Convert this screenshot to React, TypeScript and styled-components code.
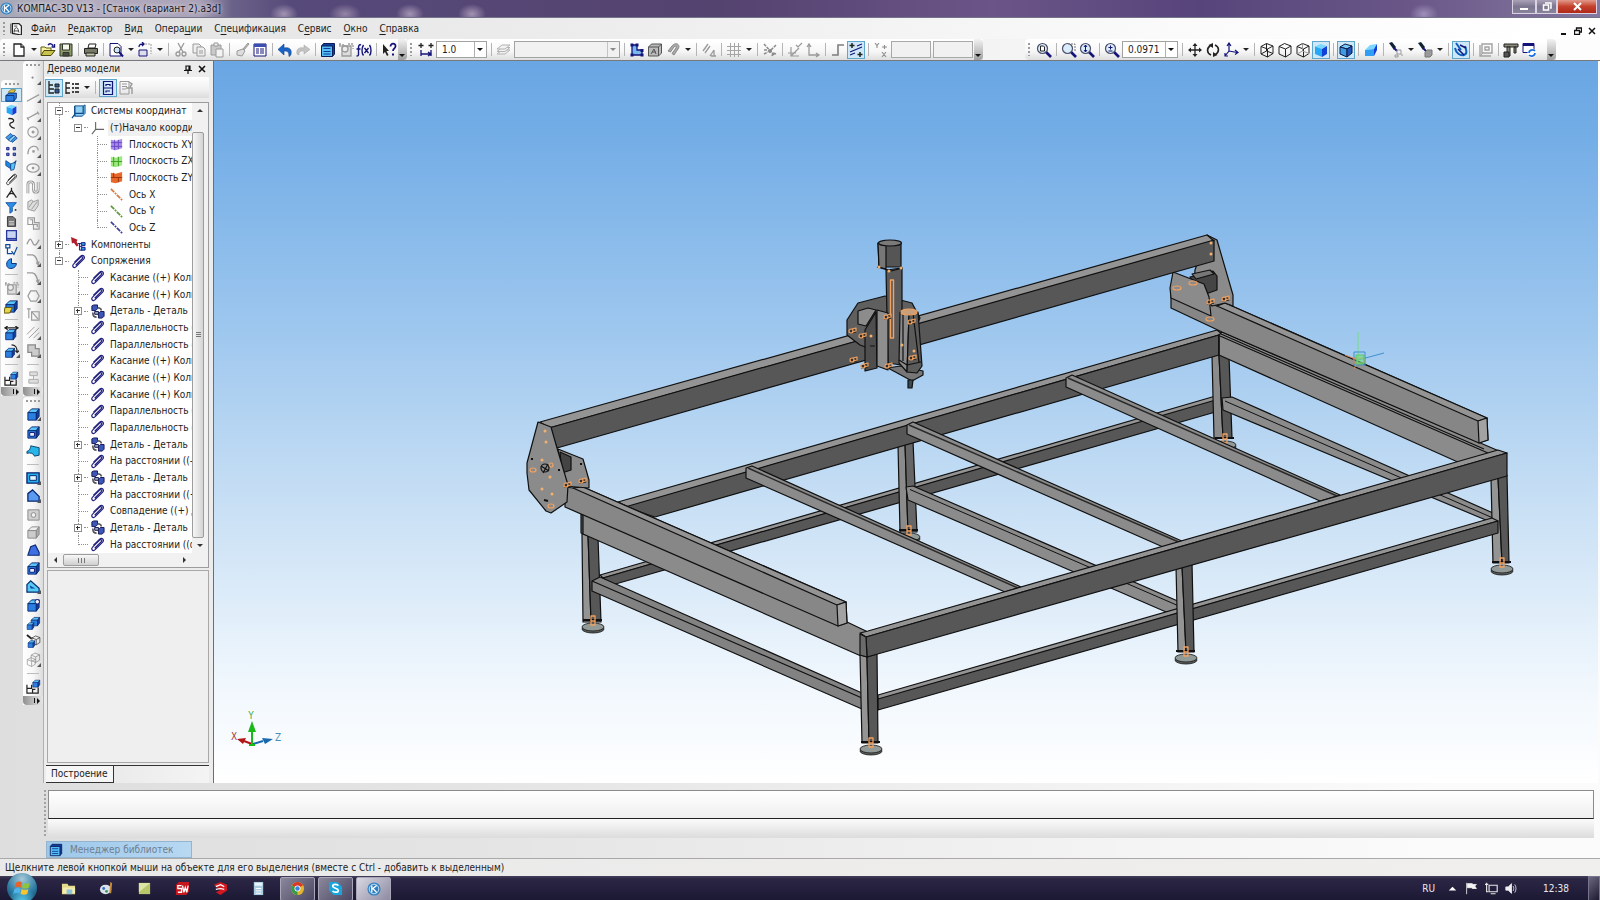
import React from "react";
import styled, { createGlobalStyle, css } from "styled-components";

const Global = createGlobalStyle`
  * { box-sizing: border-box; }
  html, body { margin: 0; padding: 0; }
  body { font-family: "DejaVu Sans Condensed", "Noto Sans", sans-serif; font-size: 10px; line-height: 16px; color: #1c1c1c; }
  button, input, select { font: inherit; color: inherit; }
  ul { list-style: none; margin: 0; padding: 0; }
`;

/* ---------- icons, all on a 16 x 16 grid ---------- */

const N = "#13137a";
const K = "#222";
const G = "#9a9a9a";
const B = "#1b6fe0";

const cube = (a: string, b: string, c: string, l: string) => (
  <g stroke={l} strokeLinejoin="round">
    <path d="M2 5l5-3 7 2-5 3z" fill={a} />
    <path d="M2 5l7 2v8l-7-3z" fill={b} />
    <path d="M9 7l5-3v7l-5 4z" fill={c} />
  </g>
);
const magnifier = (inner: React.ReactNode) => (
  <g fill="none">
    <path d="M10 10l5 5" stroke={N} strokeWidth="2.600" />
    <circle cx="6.500" cy="6.500" r="5" fill="#d9ecfa" stroke="#4d4d6b" strokeWidth="1.200" />
    {inner}
  </g>
);
const wire = (extra?: React.ReactNode) => (
  <g fill="none" stroke={K}>
    <path d="M2 4.500L7.500 1.500 14 4v7.500L8.500 15 2 12z M2 4.500l6.500 2.500L14 4 M8.500 7v8" />
    {extra}
  </g>
);
const solid = (extra?: React.ReactNode) => (
  <g>
    <g stroke="#0a2a72" strokeLinejoin="round">
      <path d="M2 6l4-4h8l-3 4z" fill="#59c4f7" />
      <path d="M2 6h9v8H2z" fill="#2b7fe0" />
      <path d="M11 6l3-4v8l-3 4z" fill="#123f9e" />
    </g>
    {extra}
  </g>
);
const greySolid = (
  <g stroke="#8a8a8a" strokeLinejoin="round">
    <path d="M2 6l4-4h8l-3 4z" fill="#eee" />
    <path d="M2 6h9v8H2z" fill="#ccc" />
    <path d="M11 6l3-4v8l-3 4z" fill="#aaa" />
  </g>
);
const paperclip = "M5 12l7-7c1.500-1.500-.5-3-2-1.500l-7 7C.5 13 3 16 5.500 13.500l8-8c2-2.500-.5-5.500-3.500-3L3.500 9";

const ICONS: Record<string, React.ReactNode> = {
  doc: (<g fill="none" stroke={K}><path d="M3 14V2h8l3 3v11z" fill="#fff" strokeWidth="1.500" /><path d="M1 2v12M5 13c0-3 1-6 3-6s2 3 3 6M5 5h4M5 11h6" /></g>),
  new: (<g fill="#fff" stroke={K} strokeWidth="1.300"><path d="M3 2h7l3 3v9H3z" /><path d="M10 2v3h3" /></g>),
  open: (<g><path d="M1 13V5h4l1 1h5v3" fill="#f7f3a0" stroke="#5c5a12" /><path d="M1 13.500l3-5h11l-4 5z" fill="#c9c34e" stroke="#4a4810" /><path d="M8 3c2-2 4-1.500 5 1m1.500-2v3h-3" fill="none" stroke={N} strokeWidth="1.400" /></g>),
  save: (<g stroke="#30382a"><path d="M2 2h12v12H2z" fill="#8c9a6c" /><path d="M4.500 2h7v6h-7z" fill="#f6f8ee" /><path d="M5 10.500h6V14H5z" fill="#4a4d40" /></g>),
  print: (<g stroke={K}><path d="M5 6l1-4h7l-1 4z" fill="#fff" /><path d="M1.500 6.500h13v5h-13z" fill="#777a66" /><path d="M3 11h9v3H3z" fill="#c5c8a8" /></g>),
  preview: (<g fill="none"><path d="M2 1.500h8l3 3V14H2z" fill="#fff" stroke={N} /><circle cx="9" cy="8" r="3" stroke={K} fill="#cfe4f4" /><path d="M11 10l4 4.500" stroke={N} strokeWidth="2" /></g>),
  pages: (<g fill="none" stroke={N}><path d="M2 8h8v6H2z" fill="#dde" /><path d="M8 2h6v10" stroke={G} strokeDasharray="2 1" /><path d="M2 5c0-3 2-3 5-3M5 0l2 2-2 2" strokeWidth="1.300" /></g>),
  cut: (<g fill="none" stroke={G} strokeWidth="1.300"><path d="M5 1l5 9M11 1L6 10" /><circle cx="5" cy="12" r="2" /><circle cx="11" cy="12" r="2" /></g>),
  copy: (<g fill="#eee" stroke={G}><path d="M2 2h6l2 2v7H2z" /><path d="M6 5h6l2 2v7H6z" /><path d="M8 9h4M8 11h4" /></g>),
  paste: (<g fill="#c9c9c9" stroke={G}><path d="M2 3h10v10H2z" /><path d="M5 1h4v3H5z" fill="#eee" /><path d="M7 7h7v8H7z" fill="#f3f3f3" /></g>),
  brush: (<g stroke={G}><path d="M9 7l5-6 1 1-5 6z" fill="#bbb" /><path d="M3 9l6-2 2 2-3 5-5-1z" fill="#ddd" /></g>),
  props: (<g><path d="M2 2h12v12H2z" fill="#fff" stroke={N} /><path d="M2 2h12v3H2z" fill="#3b4fb0" /><path d="M4 7h3M4 9h3M4 11h3M8 7h4M8 9h4M8 11h4" stroke={N} /></g>),
  undo: (<path d="M14 12c1-5-2-7-7-6V2L1 7.500 7 13V9c4 0 5 1 5 5.500 1-.5 2-1.500 2-2.500z" fill="#1a64c8" stroke="#0e3f8c" strokeWidth=".6" />),
  redo: (<path d="M2 12c-1-5 2-7 7-6V3l6 4.500L9 12V9c-4 0-5 .5-5 4z" fill="#c3c3c3" stroke="#9f9f9f" strokeWidth=".5" />),
  lib: (<g><path d="M1.500 4l2-2.500h11V12l-2 2.500" fill="#123f9e" stroke="#0a1f5c" /><path d="M1.500 4h11v10.500h-11z" fill="#55bdf2" stroke="#0a1f5c" /><path d="M3.500 6.500h7M3.500 9.500h7M3.500 12h7" stroke="#0a3f9c" /></g>),
  gear: (<g fill="none" stroke={G} strokeWidth="1.300"><path d="M4 4h9v10H4z" fill="#ddd" /><circle cx="7" cy="7" r="3" fill="#eee" /><path d="M1 3h6M2 1v4M10 2h5v5" strokeDasharray="2 1" /></g>),
  fx: (<g fill="none" stroke={N} strokeWidth="1.400"><path d="M5 3c-2-1-2.500 1-2.500 3v7c0 1-1 1-2 1M.5 7h4M7.500 3c-2 3-2 8 0 10.500M13.500 3c2 3 2 8 0 10.500M8.500 6l4 5M12.500 6l-4 5" /></g>),
  help: (<g><path d="M2 2l6 7H5.500l2 4-1.500 1-2-4L2 12z" fill={K} /><path d="M9.500 4.500c0-4 5.500-3.500 5 0-.2 2-2.500 2-2.500 4.500" fill="none" stroke={N} strokeWidth="1.800" /><path d="M11 11.500h2v2h-2z" fill={N} /></g>),
  ruler: (<g stroke={N} fill="none" strokeWidth="1.300"><path d="M3 1v5M.5 3.500h5M13 1v5M10.500 3.500h5" stroke={K} /><path d="M3 8v6M13 8v6M3 12h10M10 10l3 2-3 2" /></g>),
  layers: (<g fill="#f2f2f2" stroke="#b3b3b3"><path d="M1 12l5-4h8l-5 4z" /><path d="M1 9.500l5-4h8l-5 4z" /><path d="M1 7l5-4h8l-5 4z" /></g>),
  poly: (<g><path d="M3 3h5v5h5v5H3z" fill="#79b7ee" stroke={N} strokeWidth="1.300" /><path d="M1.500 1.500h3v3h-3zM6.500 1.500h3v3h-3zM11.500 7h3v3h-3zM11.500 11.500h3v3h-3zM1.500 11.500h3v3h-3z" fill={N} /></g>),
  letterBox: (<g fill="#bbb" stroke="#555"><path d="M1.500 5l3-3h10v9l-3 3h-10z" /><path d="M1.500 5h10v9M11.500 5l3-3M4 12l3-5 2 5M5 10h4" fill="none" /></g>),
  magnet: (<path d="M3 9l4-5c4-5 9-1 6 3l-4 6-2-1.500 4-5.500c1-2-1-2.500-2-1l-3.500 5z" fill="#aaa" stroke="#888" />),
  lines: (<g stroke={G} strokeWidth="1.300" fill="none"><path d="M2 9l5-7M4 11l5-7M9 14l4-6M13 8v6M10 14h5" /></g>),
  grid: (<path d="M4.500 1v14M8.500 1v14M12.500 1v14M1 4.500h14M1 8.500h14M1 12.500h14" stroke="#a5a5a5" fill="none" />),
  snap: (<g stroke="#8a8a8a" fill="none"><path d="M2 2l10 11M9 8l5-5M2 8h3M2 12l4-2M10 14l1-3M14 12l-3-1" strokeWidth="1.500" strokeDasharray="3 1" /><circle cx="8" cy="9" r="1.500" fill="#888" /></g>),
  lcs: (<g stroke={G} fill="none" strokeWidth="1.200"><path d="M4 5v9h8M4 14l8-8M9 3l2 2 4-4M1 11h8" /></g>),
  axes: (<g stroke={G} fill="none" strokeWidth="1.300"><path d="M4 3v10h9M2 5l2-3 2 3M11 11l3 2-3 2" /></g>),
  step: (<path d="M2 13h6V3h6" stroke="#7d7d7d" strokeWidth="1.600" fill="none" />),
  constraint: (<g stroke={K} fill="none" strokeWidth="1.500"><path d="M4 1v5M1.500 3.500h5M12 10v5M9.500 12.500h5" /><path d="M2 10l12-5M2 13l5-2M9 4l5-2" stroke={N} strokeWidth="1.100" /></g>),
  xy: (<g stroke="#8d8d8d" fill="none" strokeWidth="1.100"><path d="M2 1l2 2.500L6 1M4 3.500V6M9 5h5M11.500 3v4M9 10l4 5M13 10l-4 5" /></g>),
  zoomPage: magnifier(<path d="M4.500 4h3l1 1v4h-4z" stroke={K} fill="#fff" />),
  zoomBox: magnifier(<path d="M7 2h7v8" stroke="#777" strokeDasharray="2 1" />),
  zoomDyn: magnifier(<path d="M6.500 3v7M5 5l1.500-2L8 5M5 8l1.500 2L8 8" stroke={N} />),
  zoomPm: magnifier(<path d="M6.500 3.500v4M4.500 5.500h4M4.500 9h4" stroke={N} />),
  move: (<g><path d="M8 2v12M2 8h12" stroke={K} strokeWidth="1.300" /><path d="M8 1l2.500 3h-5zM8 15l2.500-3h-5zM1 8l3-2.500v5zM15 8l-3-2.500v5z" fill={K} /></g>),
  rotate: (<g><path d="M6 13C1.500 11 1.500 6 5.500 3.500M10 3c4.500 2 4.500 7 .5 9.500" fill="none" stroke={K} strokeWidth="1.600" /><path d="M8 1v5L3.500 3zM8 15v-5l4.500 3z" fill={K} /></g>),
  orient: (<g stroke={N} fill="none" strokeWidth="1.200"><path d="M6 9V2M6 9l8 1.500M6 9l-4 5M4 4l2-3 2 3M12 8l3 2.500-3 2M2 11v3h3" /></g>),
  wireAll: wire(<path d="M2 12l5.500-3L14 11.500M7.500 9V1.500" />),
  wireHid: wire(),
  wireThin: wire(<path d="M2 12l5.500-3L14 11.500M7.500 9V1.500" stroke={G} />),
  shaded: (<g><path d="M2 4.500L7.500 2 14 4l-5 3z" fill="#7ad8ff" /><path d="M2 4.500L9 7v8l-7-3z" fill="#27a8f5" /><path d="M9 7l5-3v8l-5 3z" fill="#1140d8" /></g>),
  shadedEdge: cube("#7cc9f5", "#3f9ae4", "#2055b8", "#0a1a4c"),
  persp: (<g><path d="M2 8l5-5 7-1-3 5z" fill="#7ad8ff" /><path d="M2 8l9-1v7H2z" fill="#2f9ef4" /><path d="M11 7l3-5v6l-3 6z" fill="#1140d8" /></g>),
  torch: (<g><path d="M1 1l3-1 4 5-2 3z" fill="#123" /><path d="M6 6l3 3" stroke={N} strokeWidth="2" /><path d="M9 8h4v4H9zM7 13h3v2H7zM13 13h2" fill="none" stroke={G} /></g>),
  torch2: (<g><path d="M1 1l3-1 4 5-2 3z" fill="#123" /><path d="M6 6l3 3" stroke={N} strokeWidth="2" /><path d="M8 10l2-2h5v5l-2 2H8z" fill="#9a9a9a" stroke="#777" /></g>),
  spin: (<g fill="none"><path d="M3 1l5 7M2 6c1 5 5 8 9 7s2-6 1-9" stroke="#0d5fc0" strokeWidth="2" /><path d="M5 7l6 6M7 3l6 3" stroke={N} strokeWidth="1.500" /></g>),
  greyBox: (<g fill="none" stroke="#a2a2a2"><path d="M2 3v11h11M4 2h10v9H4zM7 5h4v3H7z" strokeWidth="1.400" /><path d="M2 14l3-3" /></g>),
  caliper: (<g fill="#8b8b78" stroke={K}><path d="M1 2h14v3H1z" /><path d="M4 5h3v9H4zM11 5h2v6h-2z" /><path d="M1 10h5v5H1z" fill="#555" /></g>),
  refresh: (<g fill="none"><path d="M2 1.500h11v9H2z" fill="#fff" stroke={N} /><path d="M2 1.500h11v2.500H2z" fill={N} /><circle cx="11" cy="11" r="4.500" fill="#fff" /><path d="M8 11c0-3 4-4 6-2M14 11c0 3-4 4-6 2" stroke={B} strokeWidth="1.700" /></g>),
  clip: (<path d={paperclip} fill="none" stroke="#23237f" strokeWidth="1.300" />),
  clipGrey: (<path d={paperclip} fill="none" stroke="#333" strokeWidth="1.200" />),
  csys: (<g stroke="#0c4a8a"><path d="M4 2h9l2-1v9l-3 3H4z" fill="#8fd0f3" /><path d="M4 2v11M4 10H13V2M1 15l3-4" fill="none" strokeWidth="1.300" /></g>),
  origin: (<path d="M6 2v8h9M6 10l-4 5" fill="none" stroke="#666" strokeWidth="1.200" />),
  planeXY: (<g><path d="M2 3l5 1 7-2v10l-7 2-5-1z" fill="#a78be8" /><path d="M2 6h12M2 10h12M6 3v11M10 3v10" stroke="#6a47c5" /></g>),
  planeZX: (<g><path d="M2 3l5 1 7-2v10l-7 2-5-1z" fill="#9fe87f" /><path d="M2 8h12M5 3v10M10 3v10" stroke="#3a9e25" /></g>),
  planeZY: (<g><path d="M2 3l5 1 7-2v10l-7 2-5-1z" fill="#e8682a" /><path d="M2 8h12M5 3v5M10 8v5" stroke="#9c3206" /></g>),
  axisX: (<path d="M2 2l12 12" stroke="#d9783f" strokeWidth="1.800" strokeDasharray="5 1 2 1" />),
  axisY: (<path d="M2 2l12 12" stroke="#5d9a3a" strokeWidth="1.800" strokeDasharray="5 1 2 1" />),
  axisZ: (<path d="M2 2l12 12" stroke="#3f3f9c" strokeWidth="1.800" strokeDasharray="5 1 2 1" />),
  comps: (<g><path d="M0 0l7 3-1 2 2 4-2 1-3-4-2 1z" fill="#b3202c" /><path d="M7 7h4M9 7v7h3M9 10h3" stroke={N} fill="none" /><path d="M11 6h4v3h-4zM11 11h4v3h-4z" fill="#2b9fe0" stroke={N} /></g>),
  parts: (<g stroke="#141450"><path d="M2 2l2-1h4v4L6 7H2z" fill="#3b57b8" /><path d="M9 10l2-2h4v5l-2 2H9z" fill="#3b57b8" /><path d="M8 4c3 0 4 1 4 3M3 9c0 3 1 5 4 5" stroke="#555" strokeWidth="1.800" fill="none" /><path d="M5 8h4v3H5z" fill="#9ab" /></g>),
  treeA: (<g fill="none" stroke={K}><path d="M3 1v12h5M3 5h4M3 9h5" strokeWidth="1.300" /><path d="M9 4h4v3H9zM9 9h4v4H9z" fill="#2a5a9c" /></g>),
  treeB: (<g fill="none" stroke={K} strokeWidth="1.300"><path d="M2 2v12M2 3h4M2 8h4M2 13h4" /><path d="M8 4h2M8 8h2M8 12h2M11 4h4M11 8h4M11 12h4" strokeWidth="2" stroke="#444" /></g>),
  cabinet: (<g fill="none" stroke={N} strokeWidth="1.200"><path d="M3.500 1.500h9v13h-9zM3.500 8h9M6 6V4.500h4V6M6 12.500V11h4" /></g>),
  report: (<g fill="none" stroke={G}><path d="M2 1.500h9V14H2zM4 4h5M4 6.500h5M4 9h4" /><path d="M8 8h6v6M11 2l3 2-2 3" strokeWidth="1.400" /></g>),
  asm: (<g stroke="#0a2a72"><path d="M1 8l4-3h9v6l-3 4H1z" fill="#2b7fe0" /><path d="M1 8h10v7" fill="none" /><path d="M4 4l3-3h6l-2 3z" fill="#f5dc5a" stroke="#6b5a00" /></g>),
  curve: (<path d="M4 2c8-1 8 4 4 5s-2 6 4 7" fill="none" stroke={K} strokeWidth="1.600" />),
  surf: (<g fill="#3f9fe8" stroke="#0f3f8c"><path d="M1 8l6-5 3 3-6 5zM7 11l5-5 3 3-6 5z" /><path d="M4 11l7-6 2 2-6 6z" fill="#8fd0f7" /></g>),
  array: (<g fill="#5d7fc9" stroke={N}><path d="M2 3h3v3H2zM10 3h3v3h-3zM2 10h3v3H2zM10 10h3v3h-3z" /></g>),
  aux: (<g fill="#1b8be0" stroke="#0f3f8c"><path d="M1 2l6 4v6l-6-4z" /><path d="M7 6l6-2-2 9-4 1z" fill="#5dc8f5" /><path d="M14 2l-3 3" strokeWidth="1.500" /></g>),
  compass: (<path d="M8 1v3M8 4L2 13M8 4l6 9M5 9c2-1.500 4-1.500 6 0" fill="none" stroke={K} strokeWidth="1.600" />),
  filter: (<g><path d="M1 2h13L9 8v5l-3 2V8z" fill="#2b8fe8" stroke="#0d4a9a" /><path d="M12 11h2" stroke={K} strokeWidth="2" /></g>),
  sheet: (<g fill="#777" stroke={K}><path d="M3 2h7l3 3v9H3z" /><path d="M5 8h6M5 10h6M5 12h6" stroke="#ddd" /></g>),
  notebook: (<g stroke="#2a3a9c"><path d="M2 2h12v12H2z" fill="#c7d4f4" strokeWidth="1.600" /><path d="M2 12h12" strokeWidth="2" /></g>),
  weld: (<g fill="none" stroke="#0d4a9a" strokeWidth="1.500"><path d="M1 2h5v4H1zM3 6v7h6M8 10l3 4 4-9" /></g>),
  elbow: (<path d="M2 9c0-6 6-7 6-7v6h6c0 7-12 9-12 1z" fill="#2b8fe8" stroke="#0f2f7c" strokeWidth="1.200" />),
  solid: solid(),
  solidGrey: greySolid,
  solidNew: solid(<path d="M1 9h8l-3 6H0z" fill="#e8d24a" stroke="#5c5000" />),
  solidArrow: (<g><g transform="translate(0 2) scale(.9)">{solid()}</g><path d="M1 2h14M4 0L1 2l3 2M12 0l3 2-3 2" stroke={K} strokeWidth="1.200" fill="none" /></g>),
  solidTurn: (<g><g transform="translate(0 3) scale(.8)">{solid()}</g><path d="M8 1c5 0 6 3 6 8M12 7l2 2 2-2" stroke={K} strokeWidth="1.300" fill="none" /></g>),
  solidCut: solid(<path d="M4 8h5v4H4z" fill="#dff3fd" stroke={N} />),
  solidHole: solid(<circle cx="12" cy="4" r="2.400" fill="#eee" stroke={N} />),
  solidSmall: (<g><g transform="translate(6 0) scale(.62)">{solid()}</g><path d="M1 6v9h12V9M1 10h5v-4M7 15v-4h3" fill="none" stroke={K} strokeWidth="1.300" /></g>),
  solidPair: (<g><g transform="translate(4 0) scale(.75)">{solid()}</g><g transform="translate(0 6) scale(.6)">{solid()}</g></g>),
  solidPairW: (<g><g transform="translate(5 1) scale(.7)">{wire()}</g><g transform="translate(1 6) scale(.6)">{solid()}</g><path d="M1 1l5 4" stroke={K} strokeWidth="2" /></g>),
  greyPair: (<g opacity=".5"><g transform="translate(4 0) scale(.75)">{wire()}</g><g transform="translate(0 5) scale(.7)">{wire()}</g></g>),
  chamfer: (<path d="M2 6l5-4 7 7v5H2z" fill="#5a9af0" stroke="#0a2a72" strokeWidth="1.400" />),
  chamfer2: (<g><path d="M1 6l4-4 9 8v4H1z" fill="#55cbf2" stroke="#0a2a72" strokeWidth="1.300" /><path d="M4 7l6 3H5z" fill="#1140a8" /></g>),
  wedge: (<path d="M2 13l3-9 5-2 4 8v3z" fill="#3f6fe0" stroke="#0a2a72" strokeWidth="1.200" />),
  shell: (<g stroke="#0a1f6c"><path d="M1 3h13v11H1z" fill="#25b0ee" strokeWidth="1.400" /><path d="M4 6h7v5H4z" fill="#dff6ff" /></g>),
  shellGrey: (<g stroke="#8a8a8a"><path d="M2 3h12v11H2z" fill="#d0d0d0" /><circle cx="8" cy="8.500" r="2.500" fill="#f2f2f2" /></g>),
  bent: (<path d="M1 9c4-1 4-6 4-6l9 2v8l-5 1c-1-3-4-4-8-3z" fill="#27b4e8" stroke="#0a3f6c" />),
  p: (<circle cx="7" cy="7" r="1.200" fill="#888" />),
  line: (<path d="M1 13L14 6" stroke={G} strokeWidth="1.300" />),
  line2: (<g stroke={G} strokeWidth="1.300"><path d="M2 12l11-6" /><path d="M1 11l2 3M12 5l2 3" /></g>),
  circle: (<g fill="none" stroke={G} strokeWidth="1.200"><circle cx="7.500" cy="7.500" r="5.500" /><circle cx="7.500" cy="7.500" r="1" fill={G} /></g>),
  arc: (<g fill="none" stroke={G} strokeWidth="1.300"><path d="M2 12C2 2 13 1 13 8" /><circle cx="8" cy="9" r=".8" /></g>),
  ellipse: (<g fill="none" stroke={G} strokeWidth="1.300"><ellipse cx="7.500" cy="7.500" rx="6.500" ry="4.500" /><circle cx="7.500" cy="7.500" r=".8" /></g>),
  spline: (<g fill="none"><path d="M2 14V5c0-4 6-4 6 0v5c0 4 5 4 5 0V2" stroke={G} strokeWidth="3" /><path d="M2 14V5c0-4 6-4 6 0v5c0 4 5 4 5 0V2" stroke="#fff" /></g>),
  hatch: (<g fill="#ddd" stroke={G}><path d="M2 4l4-2 2 2 5-2v6l-4 6-7-2z" /><path d="M3 10l5-7M6 12l6-8" /></g>),
  contour: (<path d="M2 2h7v5h5v7H8V9H2z M4 4h3v5h5v3" fill="none" stroke={G} strokeWidth="1.200" />),
  wave: (<path d="M1 11c3-7 4-7 6-2s4 3 7-3" fill="none" stroke={G} strokeWidth="1.400" />),
  fillet: (<path d="M1 3h6c4 1 5 5 6 11M11 11l2 3 1-4" fill="none" stroke={G} strokeWidth="1.300" />),
  hexagon: (<path d="M5 2h6l3 5.500L11 13H5L2 7.500z" fill="none" stroke={G} strokeWidth="1.300" />),
  project: (<g fill="none" stroke={G} strokeWidth="1.200"><path d="M1 2h4M3 2v10M6 5h8v9H6z" /><path d="M6 5l7 8" /></g>),
  hatch2: (<path d="M1 10l8-8M3 14L14 3M8 14l6-6" fill="none" stroke={G} />),
  union: (<path d="M2 2h8v4h4v8H6v-4H2z" fill="#ccc" stroke="#888" strokeWidth="1.300" />),
  stamp: (<g fill="#ddd" stroke="#aaa"><path d="M4 2h8v4H4z" /><path d="M8 6v4M3 10h10v4H3z" /></g>),
  flag: (<path d="M2 1v14M3 2h6v5H3zM9 3h5l-2 2 2 3H9z" fill="#f4f4f4" stroke="#f4f4f4" />),
  net: (<g fill="none" stroke="#e8e8e8" strokeWidth="1.400"><path d="M5 4h10v8H5zM7 14.500h6M2 1v6M0 3h4M2 7v5h2" /></g>),
  sound: (<g fill="#f0f0f0" stroke="#f0f0f0"><path d="M1 6h3l4-4v12l-4-4H1z" /><path d="M10 5c1 2 1 4 0 6M12 3c2 3 2 7 0 10" fill="none" /></g>),
  up: (<path d="M4 10l4-4 4 4z" fill="#fff" />),
};

type IconName = keyof typeof ICONS & string;
const Svg = styled.svg<{ $s: number }>`
  width: ${(p) => p.$s}px;
  height: ${(p) => p.$s}px;
  flex: none;
  display: block;
`;
const Icon = ({ name, size = 15 }: { name: IconName; size?: number }) => (
  <Svg $s={size} viewBox="0 0 16 16" aria-hidden="true">{ICONS[name]}</Svg>
);

/* ---------- frame ---------- */

const Window = styled.div`
  min-height: 100vh;
  display: flex;
  flex-direction: column;
  background: linear-gradient(90deg, #dedede 0, #e4e4e4 30%, #fbfbfb 90%);
`;

const TitleBar = styled.header`
  display: flex;
  align-items: center;
  height: 18px;
  border-bottom: 1px solid #73738a;
  color: #17171c;
  background:
    radial-gradient(ellipse 14px 10px at 284px 14px, #a394b3, transparent),
    radial-gradient(ellipse 16px 10px at 345px 14px, #9585a5, transparent),
    radial-gradient(ellipse 14px 10px at 410px 14px, #a394b3, transparent),
    radial-gradient(ellipse 14px 10px at 472px 14px, #a394b3, transparent),
    radial-gradient(ellipse 14px 10px at 1424px 14px, #a08ebb, transparent),
    linear-gradient(90deg, #a6a8b6 0, #b4adc0 90px, #aaa2b8 200px, #6b6289 232px, #564a7a 290px, #54426f 45%, #6b5588 62%, #57447a 75%, #6a5788 88%, #8478a0 100%);
`;
const WindowTitle = styled.h1`
  margin: 0 auto 0 4px;
  font-size: 10px;
  line-height: 16px;
  font-weight: 400;
  text-shadow: 0 0 4px #fff;
`;
const Caption = styled.div`
  display: flex;
  align-self: flex-start;
  margin-right: 3px;
`;
const CaptionButton = styled.button<{ $w: number; $close?: boolean }>`
  width: ${(p) => p.$w}px;
  height: 14px;
  padding: 0;
  border: 1px solid #d8d2e2;
  border-top: 0;
  display: flex;
  align-items: center;
  justify-content: center;
  background: ${(p) => (p.$close ? "linear-gradient(#e29a8c, #c4412c 50%, #b02a1a)" : "linear-gradient(#aaa2b8, #7d7690 50%, #8a839c)")};
`;

const MenuBar = styled.nav`
  display: flex;
  align-items: center;
  height: 21px;
  background: linear-gradient(90deg, #e3e3e3, #ececec 35%, #fbfbfb 75%, #fff);
`;
const MenuItems = styled.div`
  display: flex;
  gap: 12px;
  margin: 0 auto 0 8px;
`;
const MenuButton = styled.button`
  border: 0;
  padding: 0;
  background: none;
  line-height: 18px;
  u { text-underline-offset: 2px; }
`;
const MdiButton = styled.button`
  width: 14px;
  height: 14px;
  border: 0;
  padding: 0;
  background: none;
  display: flex;
  align-items: center;
  justify-content: center;
`;
const MdiGroup = styled.div`
  display: flex;
  margin-right: 1px;
  padding-top: 4px;
`;

const Bars = styled.div`
  display: flex;
  height: 22px;
  border-bottom: 1px solid #77797c;
  background: linear-gradient(90deg, #e6e6e6, #f0f0f0 50%, #fdfdfd);
`;
const Toolbar = styled.div<{ $end?: boolean }>`
  display: flex;
  align-items: center;
  height: 21px;
  border-radius: 4px 0 0 4px;
  background: linear-gradient(#fff 10%, #f6f6f6 60%, #dedede);
  ${(p) => p.$end && css`margin-left: auto; margin-right: 44px;`}
`;
const Grip = styled.span<{ $row?: boolean }>`
  flex: none;
  ${(p) =>
    p.$row
      ? css`width: 14px; height: 2px; background: repeating-linear-gradient(90deg, #9b9b9b 0 2px, transparent 2px 4px);`
      : css`width: 2px; height: 13px; margin: 0 5px 0 3px; background: repeating-linear-gradient(#9b9b9b 0 2px, transparent 2px 4px);`}
`;
const Overflow = styled.span<{ $apart?: boolean }>`
  position: relative;
  width: 9px;
  margin-left: ${(p) => (p.$apart ? 9 : 0)}px;
  align-self: stretch;
  border-radius: 0 4px 4px 0;
  background: linear-gradient(#f2f2f2, #9f9f9f);
  &::after { content: ""; position: absolute; left: 1px; bottom: 3px; border: 3px solid transparent; border-top-color: #111; border-bottom: 0; }
`;
const ToolButton = styled.button<{ $on?: boolean }>`
  flex: none;
  width: 18px;
  height: 18px;
  padding: 0;
  display: flex;
  align-items: center;
  justify-content: center;
  border: 1px solid ${(p) => (p.$on ? "#5fa6cf" : "transparent")};
  background: ${(p) => (p.$on ? "#cfe8f7" : "none")};
`;
const Caret = styled.button`
  flex: none;
  width: 11px;
  height: 18px;
  padding: 0;
  border: 0;
  background: none;
  display: flex;
  align-items: center;
  justify-content: center;
  &::after { content: ""; border: 3px solid transparent; border-top-color: #222; border-bottom: 0; }
`;
const Sep = styled.span`
  flex: none;
  width: 1px;
  height: 13px;
  margin: 0 3px;
  background: #b5b5b5;
`;
const Combo = styled.label<{ $w: number; $off?: boolean }>`
  flex: none;
  width: ${(p) => p.$w}px;
  height: 17px;
  margin: 0 1px;
  display: flex;
  border: 1px solid #a2a2a2;
  background: ${(p) => (p.$off ? "#f1f1f1" : "#fff")};
`;
const ComboSelect = styled.select`
  flex: 1;
  min-width: 0;
  border: 0;
  padding: 0 0 0 5px;
  appearance: none;
  background: linear-gradient(#b0b0b0, #b0b0b0) right 11px top 0 / 1px 100% no-repeat;
  line-height: 15px;
  outline: 0;
`;
const ComboArrow = styled.span<{ $off?: boolean }>`
  align-self: center;
  margin: 0 3px 0 -9px;
  border: 3px solid transparent;
  border-top-color: ${(p) => (p.$off ? "#888" : "#111")};
  border-bottom: 0;
  pointer-events: none;
`;
const CoordInput = styled.input`
  flex: none;
  width: 40px;
  height: 17px;
  margin: 0 1px;
  padding: 0;
  border: 1px solid #a8a8a8;
  background: #f1f1f1;
`;

/* Toolbar contents: "|" is a separator, "v" a drop-down caret, "*" marks a pressed button. */
const Tools = ({ items }: { items: string[] }) => (
  <>
    {items.map((it, i) => {
      if (it === "|") return <Sep key={i} />;
      if (it === "v") return <Caret key={i} aria-label="Ещё" />;
      const on = it.startsWith("*");
      const name = on ? it.slice(1) : it;
      return (
        <ToolButton key={i} $on={on} aria-label={name} aria-pressed={on || undefined}>
          <Icon name={name} size={16} />
        </ToolButton>
      );
    })}
  </>
);
const ComboBox = ({ label, value, width, off }: { label: string; value: string; width: number; off?: boolean }) => (
  <Combo $w={width} $off={off}>
    <ComboSelect aria-label={label} disabled={off} defaultValue={value}><option>{value}</option></ComboSelect>
    <ComboArrow $off={off} />
  </Combo>
);

/* ---------- body ---------- */

const Body = styled.main`
  flex: 1;
  display: flex;
  min-height: 0;
`;
const Rail = styled.div<{ $w: number }>`
  flex: none;
  width: ${(p) => p.$w}px;
  padding-left: 1px;
`;
const RailBar = styled.div<{ $h?: number; $top?: number }>`
  margin-top: ${(p) => p.$top ?? 0}px;
  min-height: ${(p) => p.$h ?? 0}px;
  display: flex;
  flex-direction: column;
  align-items: stretch;
  border-radius: 4px 4px 0 0;
  background: linear-gradient(90deg, #fff, #f7f7f7 50%, #dcdcdc);
`;
const RailGrip = styled.div`
  height: 8px;
  display: flex;
  align-items: center;
  justify-content: center;
`;
const RailButton = styled.button<{ $on?: boolean; $more?: boolean; $h?: number }>`
  position: relative;
  ${(p) => (p.$h ? css`flex: none; height: ${p.$h}px;` : css`flex: 1;`)}
  padding: 0;
  display: flex;
  align-items: center;
  justify-content: center;
  border: 1px solid ${(p) => (p.$on ? "#5fa6cf" : "transparent")};
  background: ${(p) => (p.$on ? "#cfe8f7" : "none")};
  ${(p) => p.$more && css`&::after { content: ""; position: absolute; right: 1px; bottom: 1px; border: 2px solid #555; border-top-color: transparent; border-left-color: transparent; }`}
`;
const RailSep = styled.span`
  height: 1px;
  margin: 4px 4px;
  background: #bdbdbd;
`;
const RailEnd = styled.span`
  position: relative;
  height: 9px;
  border-radius: 0 0 4px 4px;
  background: linear-gradient(90deg, #8f8f8f, #e8e8e8);
  &::before { content: ""; position: absolute; right: 8px; top: 2px; width: 1px; height: 5px; background: #111; }
  &::after { content: ""; position: absolute; right: 3px; top: 2px; border: 3px solid transparent; border-left-color: #111; border-right: 0; }
`;
/* Rail contents: "|" is a separator, "*" a pressed button, a trailing "+" one with a fly-out. */
const RailTools = ({ items, height }: { items: string[]; height?: number }) => (
  <>
    {items.map((it, i) => {
      if (it === "|") return <RailSep key={i} />;
      const on = it.startsWith("*");
      const more = it.endsWith("+");
      const name = it.replace(/[*+]/g, "");
      return (
        <RailButton key={i} $on={on} $more={more} $h={height} aria-label={name}>
          <Icon name={name} size={height === 14 ? 13 : 15} />
        </RailButton>
      );
    })}
  </>
);

const Panel = styled.aside`
  flex: none;
  width: 171px;
  padding: 0 4px 0 3px;
  display: flex;
  flex-direction: column;
  background: #ececec;
  border-left: 1px solid #b0b0b0;
  border-right: 1px solid #6e6e6e;
`;
const PanelHead = styled.div`
  display: flex;
  align-items: center;
  height: 16px;
  h2 { margin: 0 auto 0 0; font-size: 10px; line-height: 16px; font-weight: 400; }
`;
const HeadButton = styled.button`
  width: 14px;
  height: 14px;
  padding: 0;
  border: 0;
  background: none;
  display: flex;
  align-items: center;
  justify-content: center;
`;
const PanelTools = styled.div`
  display: flex;
  align-items: center;
  height: 21px;
  margin-left: -2px;
  background: linear-gradient(#fff, #f0f0f0 60%, #dcdcdc);
`;
const TreeBox = styled.div`
  flex: none;
  margin-top: 4px;
  display: grid;
  grid-template-columns: 1fr 16px;
  border: 1px solid #9c9c9c;
  background: #fff;
`;
const TreeList = styled.ul`
  height: 450px;
  overflow: hidden;
  display: grid;
  grid-auto-rows: 1fr;
`;
const TreeRow = styled.li<{ $depth: number; $sel?: boolean }>`
  position: relative;
  min-height: 0;
  display: flex;
  align-items: center;
  padding-left: ${(p) => 6 + p.$depth * 19}px;
  white-space: nowrap;
  background: ${(p) => (p.$sel ? "linear-gradient(90deg, transparent 60px, #f0f0f0 60px)" : "none")};
`;
/* A vertical dotted guide running through the row at a tree level. */
const Guide = styled.i<{ $level: number; $end?: boolean }>`
  position: absolute;
  left: ${(p) => 11 + p.$level * 19}px;
  top: 0;
  height: ${(p) => (p.$end ? "50%" : "100%")};
  border-left: 1px dotted #8f8f8f;
`;
const Toggle = styled.button`
  position: relative;
  flex: none;
  width: 8px;
  height: 8px;
  margin: 0 2px 0 1px;
  padding: 0;
  border: 1px solid #8d8d8d;
  background: #fff;
  &::before { content: ""; position: absolute; left: 1px; top: 3px; width: 4px; height: 1px; margin-top: -1px; background: #333; }
  &[aria-expanded="false"]::after { content: ""; position: absolute; left: 3px; top: 1px; width: 1px; height: 4px; margin-left: -1px; background: #333; }
`;
const Dash = styled.i<{ $long?: boolean }>`
  flex: none;
  width: ${(p) => (p.$long ? 9 : 4)}px;
  margin-left: ${(p) => (p.$long ? 6 : 0)}px;
  border-top: 1px dotted #8f8f8f;
`;
const TreeLabel = styled.span`
  margin-left: 5px;
`;
const TreeIcon = styled.span`
  width: 15px;
  flex: none;
  margin-left: 2px;
`;
const VScroll = styled.div`
  display: flex;
  flex-direction: column;
  align-items: flex-start;
  background: #f1f1f1;
`;
const HScroll = styled.div`
  grid-column: 1 / 3;
  display: flex;
  align-items: center;
  height: 14px;
  padding-right: 16px;
  background: #f1f1f1;
`;
const ScrollButton = styled.button<{ $dir: "up" | "down" | "left" | "right" }>`
  width: 15px;
  height: 15px;
  flex: none;
  border: 0;
  padding: 0;
  background: none;
  display: flex;
  align-items: center;
  justify-content: center;
  &::after {
    content: "";
    border: 3px solid transparent;
    ${(p) => ({
      up: "border-bottom-color:#333;border-top:0;",
      down: "border-top-color:#333;border-bottom:0;",
      left: "border-right-color:#333;border-left:0;",
      right: "border-left-color:#333;border-right:0;",
    })[p.$dir]}
  }
`;
const VThumb = styled.div`
  flex: 1;
  width: 12px;
  margin-top: 14px;
  display: flex;
  align-items: center;
  justify-content: center;
  border: 1px solid #9d9d9d;
  border-radius: 2px;
  background: linear-gradient(90deg, #f6f6f6, #d4d4d4);
  &::after { content: ""; width: 5px; height: 6px; background: repeating-linear-gradient(#777 0 1px, transparent 1px 2px); }
`;
const HThumb = styled.div`
  width: 36px;
  height: 12px;
  margin-right: auto;
  display: flex;
  align-items: center;
  justify-content: center;
  border: 1px solid #9d9d9d;
  border-radius: 2px;
  background: linear-gradient(#f8f8f8, #cfcfcf);
  &::after { content: ""; width: 7px; height: 5px; background: repeating-linear-gradient(90deg, #777 0 1px, transparent 1px 3px); }
`;
const Preview = styled.div`
  flex: 1;
  margin-top: 2px;
  border: 1px solid #a8a8a8;
  background: #efefef;
`;
const TabRow = styled.div`
  height: 18px;
  margin: 2px 0 0 -1px;
  border-top: 1px solid #333;
  background: linear-gradient(90deg, #e4e4e4, #f4f4f4);
`;
const Tab = styled.button`
  height: 17px;
  padding: 0 6px 0 5px;
  border: 0;
  border-right: 1px solid #333;
  border-bottom: 1px solid #333;
  background: #f6f6f6;
  line-height: 16px;
`;

const Viewport = styled.section`
  flex: 1;
  min-width: 0;
  display: flex;
  margin-right: 2px;
  background: linear-gradient(#69a6e3 0, #73ade6 10%, #9cc6ee 36%, #c9e0f5 62%, #f0f7fd 86%, #fff 100%);
`;
const Drawing = styled.svg`
  width: 100%;
  height: 100%;
  display: block;
`;

/* ---------- footer ---------- */

const PropertyBar = styled.div`
  display: flex;
  padding: 7px 6px 2px 44px;
`;
const PropertyFields = styled.div`
  flex: 1;
`;
const PropertyLine = styled.div`
  height: 29px;
  border: 1px solid #8c8c8c;
  border-bottom-color: #222;
  background: linear-gradient(#fff, #efefef);
`;
const PropertyTabs = styled.div`
  height: 19px;
  background: linear-gradient(#fbfbfb, #dcdcdc);
`;
const PropertyGrip = styled.span`
  width: 2px;
  margin-right: 2px;
  background: repeating-linear-gradient(#a2a2a2 0 2px, transparent 2px 4px);
`;
const DockRow = styled.div`
  padding: 1px 0 0 46px;
  height: 19px;
  border-bottom: 1px solid #a9a9a9;
`;
const DockTab = styled.button`
  width: 146px;
  height: 17px;
  display: flex;
  align-items: center;
  gap: 7px;
  padding: 0 0 0 2px;
  border: 1px solid #93b5d0;
  background: linear-gradient(90deg, #9cc7ea, #b8d8f2);
  color: #6f7f90;
`;
const StatusBar = styled.footer`
  height: 17px;
  padding-left: 5px;
  line-height: 17px;
  background: linear-gradient(90deg, #e9e9e9, #f0efed);
`;

const Taskbar = styled.div`
  height: 25px;
  display: flex;
  align-items: center;
  background: linear-gradient(#453f5a 0, #2b2643 3px, #221e3b 60%, #1a1833);
  color: #e9e9ef;
`;
const StartButton = styled.button`
  position: relative;
  width: 30px;
  height: 30px;
  margin: -3px 0 -2px 7px;
  padding: 0;
  border: 0;
  border-radius: 50%;
  background: radial-gradient(circle at 50% 100%, #5fd8f8, transparent 45%), radial-gradient(circle at 50% 20%, #a5c9d8, #2b7aa2 55%, #0c3352);
  display: flex;
  align-items: center;
  justify-content: center;
`;
const TaskList = styled.div`
  display: flex;
  margin: 0 auto 0 12px;
`;
const TaskButton = styled.button<{ $state?: "open" | "front" }>`
  width: 38px;
  height: 24px;
  padding: 0;
  display: flex;
  align-items: center;
  justify-content: center;
  border: 1px solid transparent;
  background: none;
  ${(p) =>
    p.$state &&
    css`
      width: 35px;
      margin-left: 3px;
      border-color: #a9a6b8;
      border-radius: 2px;
      background: ${p.$state === "front" ? "linear-gradient(135deg, #d8d8e2, #8d8aa2)" : "linear-gradient(135deg, #8b889c, #4b4763)"};
    `}
`;
const Tray = styled.div`
  display: flex;
  align-items: center;
  gap: 5px;
`;
const TrayButton = styled.button`
  width: 15px;
  height: 18px;
  padding: 0;
  border: 0;
  background: none;
  display: flex;
  align-items: center;
`;
const Clock = styled.time`
  margin: 0 19px 0 23px;
`;
const Language = styled.span`
  margin-right: 5px;
`;
const ShowDesktop = styled.button`
  width: 12px;
  height: 25px;
  padding: 0;
  border: 1px solid #77738c;
  background: linear-gradient(135deg, #6b6780, #1d1a32);
`;

/* ---------- data ---------- */

type Node = { d: number; t: string; i: IconName; tog?: "+" | "-"; sel?: boolean };
const TREE: Node[] = [
  { d: 0, t: "Системы координат", i: "csys", tog: "-" },
  { d: 1, t: "(т)Начало координат", i: "origin", tog: "-", sel: true },
  { d: 2, t: "Плоскость XY", i: "planeXY" },
  { d: 2, t: "Плоскость ZX", i: "planeZX" },
  { d: 2, t: "Плоскость ZY", i: "planeZY" },
  { d: 2, t: "Ось X", i: "axisX" },
  { d: 2, t: "Ось Y", i: "axisY" },
  { d: 2, t: "Ось Z", i: "axisZ" },
  { d: 0, t: "Компоненты", i: "comps", tog: "+" },
  { d: 0, t: "Сопряжения", i: "clip", tog: "-" },
  { d: 1, t: "Касание ((+) Кольцо", i: "clip" },
  { d: 1, t: "Касание ((+) Кольцо", i: "clip" },
  { d: 1, t: "Деталь - Деталь", i: "parts", tog: "+" },
  { d: 1, t: "Параллельность ((+)", i: "clip" },
  { d: 1, t: "Параллельность ((+)", i: "clip" },
  { d: 1, t: "Касание ((+) Кольцо", i: "clip" },
  { d: 1, t: "Касание ((+) Кольцо", i: "clip" },
  { d: 1, t: "Касание ((+) Кольцо", i: "clip" },
  { d: 1, t: "Параллельность ((+)", i: "clip" },
  { d: 1, t: "Параллельность ((+)", i: "clip" },
  { d: 1, t: "Деталь - Деталь", i: "parts", tog: "+" },
  { d: 1, t: "На расстоянии ((-)", i: "clip" },
  { d: 1, t: "Деталь - Деталь", i: "parts", tog: "+" },
  { d: 1, t: "На расстоянии ((+)", i: "clip" },
  { d: 1, t: "Совпадение ((+) Деталь", i: "clip" },
  { d: 1, t: "Деталь - Деталь", i: "parts", tog: "+" },
  { d: 1, t: "На расстоянии ((фикс)", i: "clip" },
];

const MENU: [string, string, string][] = [
  ["", "Ф", "айл"], ["", "Р", "едактор"], ["", "В", "ид"], ["Опера", "ц", "ии"],
  ["С", "п", "ецификация"], ["С", "е", "рвис"], ["", "О", "кно"], ["", "С", "правка"],
];

/* ---------- the machine ---------- */

const LIGHT = "#8b8b8b";
const DARK = "#575757";
const TOP = "#949494";
type Shape = [string, string];
const Faces = ({ shapes }: { shapes: Shape[] }) => (
  <>{shapes.map(([pts, fill], i) => <polygon key={i} points={pts} fill={fill} />)}</>
);
const Foot = ({ x, y }: { x: number; y: number }) => (
  <g>
    <ellipse cx={x} cy={y + 2} rx="11" ry="4" fill="#5c6260" strokeWidth=".8" />
    <ellipse cx={x} cy={y} rx="11" ry="4" fill="#929a97" strokeWidth=".8" />
    <path d={`M${x - 10} ${y - 7}h19`} strokeWidth="2" />
    <path d={`M${x - 2} ${y - 2}v-9h4v9z M${x - 2} ${y - 6}h4`} stroke="#f2a15e" fill="none" strokeWidth="1.300" />
  </g>
);
const Bolts = ({ at }: { at: [number, number][] }) => (
  <g fill="none">
    {at.map(([x, y], i) => (
      <g key={i}>
        <path d={`M${x - 4} ${y + 1}l7-1`} strokeWidth="3.500" stroke="#33302c" />
        <ellipse cx={x - 2} cy={y} rx="2" ry="2" stroke="#f2a15e" />
        <path d={`M${x - 1} ${y - 2}l4-1v3l-4 1`} stroke="#f2a15e" />
      </g>
    ))}
  </g>
);

const Machine = () => (
  <Drawing viewBox="214 61 1384 722" preserveAspectRatio="xMidYMid meet" role="img" aria-label="Станок">
    <g stroke="#101010" strokeWidth="1.200" strokeLinejoin="round" fill="none">
      {/* rear lower rail */}
      <Faces shapes={[["600,575 1219,395 1219,400 603,578", TOP], ["603,578 1219,399 1219,411 612,585", DARK]]} />
      {/* rear legs */}
      <Faces shapes={[["1212,355 1219,355 1223,438 1214,438", LIGHT], ["1219,355 1229,357 1232,438 1223,438", DARK]]} />
      <Foot x={1225} y={445} />
      <Faces shapes={[["898,445 905,443 908,532 900,532", LIGHT], ["905,443 913,441 917,532 908,532", "#666"]]} />
      <Foot x={909} y={537} />
      {/* lower side and middle rails */}
      <Faces shapes={[
        ["1222,398 1232,397 1493,513 1493,523 1223,410", LIGHT],
        ["906,487 913,486 1180,602 1180,618 908,500", LIGHT],
      ]} />
      <path d="M1225 401L1493 518M910 489.500L1180 606.500" strokeWidth="1" />
      {/* rear beam */}
      <Faces shapes={[["618,502 1217,330 1222,334 628,507", TOP], ["625,507 1219,335 1219,355 655,517", DARK]]} />
      {/* cross members */}
      <Faces shapes={[
        ["746,468 752,466 1021,587 1005,592 746,478", LIGHT],
        ["907,425 913,422 1184,542 1163,547 907,434", LIGHT],
        ["1066,378 1072,375 1340,495 1320,501 1066,387", LIGHT],
      ]} />
      <path d="M748 468L1018 588M909 425L1181 543M1068 378L1337 496" strokeWidth="1.500" stroke="#2a2a2a" />
      {/* right side beam and guide */}
      <Faces shapes={[
        ["1219,335 1222,332 1499,451 1460,463 1219,355", LIGHT],
        ["1171,308 1171,290 1217,306 1225,303 1487,418 1488,440 1479,443 1222,332", "#868686"],
        ["1217,306 1225,303 1487,418 1478,421", TOP],
        ["1478,421 1487,418 1488,440 1479,443", "#a2a2a2"],
      ]} />
      <path d="M1220 336L1488 453M1221 334L1484 449M1219 335V355" />
      {/* right leg */}
      <Faces shapes={[["1491,478 1498,477 1502,563 1493,563", TOP], ["1498,477 1507,475 1509,563 1502,563", DARK]]} />
      <Foot x={1502} y={569} />
      {/* left legs */}
      <Faces shapes={[
        ["582,534 588,534 591,622 583,622", TOP], ["588,534 598,538 601,622 591,622", DARK],
        ["581,514 588,516 588,536 581,533", DARK],
      ]} />
      <Foot x={593} y={627} />
      <Faces shapes={[["592,581 600,577 862,693 862,709 592,591", "#828282"]]} />
      <path d="M592 581L862 698" />
      {/* left side beam and guide */}
      <Faces shapes={[
        ["583,512 847,622 868,632 861,635 861,656 583,534", LIGHT],
        ["565,507 565,487 573,488 583,487 846,602 847,623 838,626", "#878787"],
        ["573,488 583,487 846,602 837,605", TOP],
        ["837,605 846,602 847,623 838,626", "#a2a2a2"],
      ]} />
      {/* front lower rail */}
      <Faces shapes={[["878,695 1492,518 1498,521 878,700", TOP], ["878,699 1498,521 1498,533 878,710", DARK]]} />
      {/* front legs */}
      <Faces shapes={[
        ["1176,566 1182,565 1186,652 1178,652", TOP], ["1182,565 1192,563 1194,652 1186,652", DARK],
        ["860,655 867,657 869,743 862,743", TOP], ["867,657 877,654 878,743 869,743", DARK],
      ]} />
      <Foot x={1186} y={658} />
      <Foot x={871} y={749} />
      {/* front beam */}
      <Faces shapes={[
        ["860,633 868,631 1498,450 1507,453 866,637", TOP],
        ["866,637 1507,453 1507,476 867,657", DARK],
        ["860,634 866,637 867,657 860,655", "#6b6b6b"],
      ]} />
      {/* gantry: right carriage behind the beam */}
      <Faces shapes={[
        ["1207,235 1217,240 1233,295 1233,306 1225,303 1212,306 1194,286 1195,270", LIGHT],
        ["1190,277 1213,271 1217,276 1217,290 1200,296", "#454545"],
        ["1192,274 1210,270 1214,274 1196,279", "#777"],
        ["1173,272 1204,284 1209,297 1211,316 1171,298 1170,288", LIGHT],
      ]} />
      <Bolts at={[[1211, 302], [1226, 299]]} />
      <g stroke="#f2a15e"><ellipse cx="1177" cy="288" rx="4" ry="2" /><ellipse cx="1193" cy="283" rx="4" ry="2" /><ellipse cx="1210" cy="319" rx="4" ry="2" /></g>
      {/* gantry: left carriage */}
      <Faces shapes={[
        ["558,449 583,459 589,480 589,488 565,486", LIGHT],
        ["560,452 571,457 571,470 562,473", "#444"],
      ]} />
      {/* gantry beam */}
      <Faces shapes={[
        ["540,422 1207,235 1214,241 549,428", TOP],
        ["549,428 1214,240 1214,261 557,448", DARK],
        ["538,422 551,427 557,448 568,485 567,502 551,513 546,511 529,490 527,473 527,463", LIGHT],
      ]} />
      <Bolts at={[[568, 485], [583, 481]]} />
      <g stroke="#f2a15e"><ellipse cx="533" cy="470" rx="3" ry="2" /><ellipse cx="551" cy="506" rx="3" ry="2" /><ellipse cx="551" cy="465" rx="2" ry="2" /></g>
      <g fill="#f2b06e" stroke="none">
        {[[545, 431], [546, 442], [542, 460], [550, 477], [542, 489], [552, 494], [1211, 243], [1211, 254]].map(([x, y]) => <circle key={`${x}-${y}`} cx={x} cy={y} r="1.500" />)}
      </g>
      <circle cx="545" cy="468" r="4" /><path d="M541 466l8 5M548 464l-5 9" /><path d="M544 500l4 1M532 458v2M559 469v2M581 463v2" strokeWidth="2" />
      {/* spindle head */}
      <Faces shapes={[
        ["847,335 847,320 858,303 885,296 912,303 920,318 900,360 860,345", "#5f5f5f"],
        ["858,311 868,308 876,310 866,326 858,324", "#8c8c8c"],
        ["886,270 902,268 902,312 901,365 888,363", "#595959"],
        ["878,243 901,243 901,267 879,267", "#555"],
        ["878,243 886,245 886,269 879,267", "#777"],
        ["865,330 876,312 877,368 865,371", "#4e4e4e"],
        ["877,310 888,313 888,370 877,366", "#8e8e8e"],
        ["888,368 900,366 923,371 923,375 912,381", "#777"],
        ["900,312 909,315 907,372 899,363", "#8a8a8a"],
        ["909,315 918,312 922,366 917,373 907,372", "#5b5b5b"],
        ["908,380 913,380 912,388 908,388", "#3a4a52"],
      ]} />
      <ellipse cx="890" cy="243" rx="11.500" ry="3" fill="#7a7a7a" />
      <path d="M877 267l14 4 12-3M899 360l8 5 14-3M903 313v48M913 313l6 50M870 346h5" />
      <ellipse cx="909" cy="312" rx="8" ry="3" fill="#c9a07c" stroke="#f2a15e" />
      <rect x="890.500" y="280" width="3" height="58" stroke="#f2a15e" strokeWidth="1.400" />
      <Bolts at={[[853, 331], [863, 336], [854, 360], [865, 366], [888, 317], [889, 366], [912, 322], [913, 358]]} />
      <g fill="#f2b06e" stroke="none"><circle cx="879" cy="267" r="1.500" /><circle cx="901" cy="268" r="1.500" /><circle cx="889" cy="271" r="1.500" /><circle cx="871" cy="336" r="1.500" /><circle cx="902" cy="345" r="1.500" /><circle cx="914" cy="351" r="1.500" /></g>
    </g>
    {/* model origin */}
    <g fill="none" strokeWidth="1">
      <path d="M1358 332v28" stroke="#72e07c" />
      <path d="M1358 360l26-7M1354 352h11v13h-11z" stroke="#3f8fd0" />
      <path d="M1345 355l13 5-4 9M1354 358h10v5h-10z" stroke="#d98a5a" />
      <path d="M1356 355h8v9h-8z" fill="#72e07c" fillOpacity=".6" stroke="#54c869" />
    </g>
    {/* view triad */}
    <g fontFamily="DejaVu Sans Condensed, sans-serif" fontSize="10" textAnchor="middle" strokeWidth="2">
      <path d="M252 744l-8-3" stroke="#b31515" /><path d="M237 739l9-1-3 6z" fill="#b31515" />
      <path d="M253 744l10-3" stroke="#1668b0" /><path d="M273 739l-11-1 3 6z" fill="#1668b0" />
      <path d="M252 745v-14" stroke="#1bb81b" /><path d="M252 721l4 11h-8z" fill="#1bb81b" />
      <path d="M249 745h6" stroke="#1bb81b" />
      <text x="234" y="740" fill="#a33a3a">X</text>
      <text x="251" y="719" fill="#4fae4f">Y</text>
      <text x="278" y="741" fill="#4f8cb8">Z</text>
    </g>
  </Drawing>
);

/* ---------- logos ---------- */

const KompasLogo = ({ size }: { size: number }) => (
  <Svg $s={size} viewBox="0 0 16 16" aria-hidden="true">
    <circle cx="8" cy="8" r="7.500" fill="#2f7fc0" />
    <circle cx="8" cy="8" r="5.500" fill="none" stroke="#d5ecfa" />
    <path d="M5.500 4v8M6 8l5-4M7 7.500l4 4.500" stroke="#fff" strokeWidth="1.500" fill="none" />
  </Svg>
);
const WindowsLogo = () => (
  <Svg $s={18} viewBox="0 0 16 16" aria-hidden="true">
    <path d="M2.500 3.500c2-1.500 4-1.500 5.500-.5L7 7.500C5 6.500 3.500 6.500 1.500 8z" fill="#e8622a" />
    <path d="M9 3.500c2 1 4 1 6-.2l-1 4.400c-2 1.200-4 1-6 0z" fill="#8cc63f" />
    <path d="M1.200 9c2-1.500 4-1.300 5.500-.4l-1 4.400C4 12 2.200 12 .2 13.500z" fill="#4fb4ea" />
    <path d="M7.700 8.800c2 1 4 1 6 0l-1 4.300c-2 1.200-4 1-6 0z" fill="#f7c52e" />
  </Svg>
);
const APPS: { n: string; s?: "open" | "front"; g: React.ReactNode }[] = [
  { n: "Проводник", g: <><path d="M1 3h6l1 2h7v9H1z" fill="#e6d98a" /><path d="M2 7h13v6H2z" fill="#f3ecb0" /><path d="M6 9h6v5H6z" fill="#8fc4d8" /></> },
  { n: "Paint", g: <><ellipse cx="7" cy="9" rx="6" ry="5" fill="#d9e2ea" /><circle cx="5" cy="8" r="1.500" fill="#3a6fc0" /><circle cx="8" cy="11" r="1.500" fill="#3a9a5a" /><path d="M12 1l2 1-1 11h-2z" fill="#c98a3a" /></> },
  { n: "Редактор", g: <><path d="M2 2h12v12H2z" fill="#b9c66a" /><path d="M2 2h12L2 12z" fill="#dde5a4" /></> },
  { n: "SolidWorks", g: <><path d="M1 4l3-3h11v10l-3 4H1z" fill="#c4161c" /><path d="M7 5H3v3h4v4H3M8 5l1.500 7L11 7l1.500 5L14 5" stroke="#fff" fill="none" strokeWidth="1.400" /></> },
  { n: "SketchUp", g: <><path d="M1 4l7-3 7 3v6l-7 5-5-3 4-2z" fill="#d3191f" /><path d="M3 6l5-2 4 2M3 9l5-1 4 1" stroke="#fff" fill="none" strokeWidth="1.300" /></> },
  { n: "Калькулятор", g: <><path d="M3 1h10v14H3z" fill="#a9cbe0" /><path d="M4 2h8v3H4z" fill="#e9f5fb" /><path d="M5 8h6M5 10.500h6M5 13h6" stroke="#fff" /></> },
  { n: "Chrome", s: "open", g: <><circle cx="8" cy="8" r="7" fill="#e3b52c" /><path d="M8 8L2 4.500A7 7 0 0 1 14 4.500z" fill="#d8392b" /><path d="M8 8L2 4.500A7 7 0 0 0 8 15z" fill="#3a9a4a" /><circle cx="8" cy="8" r="3.200" fill="#fff" /><circle cx="8" cy="8" r="2.400" fill="#3f83e0" /></> },
  { n: "Skype", s: "open", g: <><path d="M1 1h9l5 5v9H6l-5-5z" fill="#18a5dc" /><path d="M11 5c-1-2-6-2-6 .5s6 2 6 4.500-5 2.500-6 .5" stroke="#fff" fill="none" strokeWidth="1.800" /></> },
];

export default function App() {
  return (
    <>
      <Global />
      <Window>
        <TitleBar>
          <KompasLogo size={13} />
          <WindowTitle>КОМПАС-3D V13 - [Станок (вариант 2).a3d]</WindowTitle>
          <Caption>
            <CaptionButton $w={24} aria-label="Свернуть"><svg width="10" height="8" aria-hidden="true"><path d="M1 5h8v2H1z" fill="#fff" /></svg></CaptionButton>
            <CaptionButton $w={21} aria-label="Развернуть"><svg width="10" height="9" aria-hidden="true"><path d="M3 1h6v5H8M1.500 3h5v5h-5z" fill="none" stroke="#fff" strokeWidth="1.500" /></svg></CaptionButton>
            <CaptionButton $w={40} $close aria-label="Закрыть"><svg width="9" height="9" aria-hidden="true"><path d="M1 1l7 7M8 1L1 8" stroke="#fff" strokeWidth="2" /></svg></CaptionButton>
          </Caption>
        </TitleBar>

        <MenuBar>
          <Grip />
          <Icon name="doc" size={13} />
          <MenuItems>
            {MENU.map(([a, u, b]) => <MenuButton key={a + u + b}>{a}<u>{u}</u>{b}</MenuButton>)}
          </MenuItems>
          <MdiGroup>
            <MdiButton aria-label="Свернуть документ"><svg width="8" height="8" aria-hidden="true"><path d="M1 6h5v2H1z" fill="#111" /></svg></MdiButton>
            <MdiButton aria-label="Восстановить документ"><svg width="8" height="8" aria-hidden="true"><path d="M2.500 3V1h5v4H6M.5 3.500h5v4h-5z" fill="none" stroke="#111" strokeWidth="1.300" /></svg></MdiButton>
            <MdiButton aria-label="Закрыть документ"><svg width="8" height="8" aria-hidden="true"><path d="M1 1l6 6M7 1L1 7" stroke="#111" strokeWidth="1.500" /></svg></MdiButton>
          </MdiGroup>
        </MenuBar>

        <Bars>
          <Toolbar>
            <Grip />
            <Tools items={["new", "v", "open", "save", "|", "print", "|", "preview", "v", "pages", "v", "|", "cut", "copy", "paste", "|", "brush", "props", "|", "undo", "redo", "|", "lib", "gear", "fx", "|", "help"]} />
            <Overflow />
          </Toolbar>
          <Toolbar>
            <Grip />
            <Tools items={["ruler"]} />
            <ComboBox label="Шаг курсора" value="1.0" width={51} />
            <Tools items={["|", "layers"]} />
            <ComboBox label="Слой" value="" width={106} off />
            <Tools items={["|", "poly", "letterBox", "magnet", "v", "|", "lines", "|", "grid", "v", "|", "snap", "|", "lcs", "axes", "|", "step", "*constraint", "|", "xy"]} />
            <CoordInput aria-label="Координата X" disabled />
            <CoordInput aria-label="Координата Y" disabled />
            <Overflow />
          </Toolbar>
          <Toolbar $end>
            <Grip />
            <Tools items={["zoomPage", "|", "zoomBox", "zoomDyn", "|", "zoomPm"]} />
            <ComboBox label="Масштаб" value="0.0971" width={56} />
            <Tools items={["|", "move", "rotate", "orient", "v", "|", "wireAll", "wireHid", "wireThin", "*shaded", "|", "*shadedEdge", "|", "persp", "|", "torch", "v", "torch2", "v", "|", "*spin", "|", "greyBox", "|", "caliper", "refresh"]} />
            <Overflow $apart />
          </Toolbar>
        </Bars>

        <Body>
          <Rail $w={22}>
            <RailBar $top={19}>
              <RailGrip><Grip $row /></RailGrip>
              <RailTools height={14} items={["*asm", "shaded", "curve", "surf", "array", "aux", "clipGrey", "compass", "filter", "sheet", "notebook", "weld", "elbow"]} />
              <RailTools height={18} items={["|", "gear+", "solidNew", "|", "solidArrow", "solidTurn+", "|", "solidSmall"]} />
              <RailEnd />
            </RailBar>
          </Rail>
          <Rail $w={21}>
            <RailBar $h={335}>
              <RailGrip><Grip $row /></RailGrip>
              <RailTools items={["p+", "line+", "line2+", "circle+", "arc+", "ellipse+", "spline", "hatch", "contour", "wave+", "fillet+", "fillet+", "hexagon+", "project", "hatch2+", "union+", "|", "stamp"]} />
              <RailEnd />
            </RailBar>
            <RailBar $top={1} $h={308}>
              <RailGrip><Grip $row /></RailGrip>
              <RailTools items={["solid+", "solidCut", "bent", "|", "shell+", "chamfer+", "shellGrey", "solidGrey", "wedge", "solidCut", "chamfer2+", "solidHole", "solidPair", "solidPairW", "greyPair+", "|", "solidSmall"]} />
              <RailEnd />
            </RailBar>
          </Rail>

          <Panel>
            <PanelHead>
              <h2>Дерево модели</h2>
              <HeadButton aria-label="Закрепить"><svg width="8" height="9" aria-hidden="true"><path d="M2 1h4v4H2zM0 5.500h8M4 6v3M5 1v4" fill="none" stroke="#111" strokeWidth="1.200" /></svg></HeadButton>
              <HeadButton aria-label="Закрыть панель"><svg width="8" height="8" aria-hidden="true"><path d="M1 1l6 6M7 1L1 7" stroke="#111" strokeWidth="1.600" /></svg></HeadButton>
            </PanelHead>
            <PanelTools>
              <Tools items={["*treeA", "treeB", "v", "|", "*cabinet", "report"]} />
            </PanelTools>
            <TreeBox>
              <TreeList>
                {TREE.map((n, i) => (
                  <TreeRow key={i} $depth={n.d} $sel={n.sel}>
                    {i < 10 && <Guide $level={0} $end={i === 9} />}
                    {n.d === 2 && <Guide $level={2} $end={i === 7} />}
                    {i > 9 && <Guide $level={1} $end={i === TREE.length - 1} />}
                    {n.tog ? <><Toggle aria-expanded={n.tog === "-"} aria-label={n.t} /><Dash /></> : <Dash $long />}
                    <TreeIcon><Icon name={n.i} size={15} /></TreeIcon>
                    <TreeLabel>{n.t}</TreeLabel>
                  </TreeRow>
                ))}
              </TreeList>
              <VScroll>
                <ScrollButton $dir="up" aria-label="Вверх" />
                <VThumb />
                <ScrollButton $dir="down" aria-label="Вниз" />
              </VScroll>
              <HScroll>
                <ScrollButton $dir="left" aria-label="Влево" />
                <HThumb />
                <ScrollButton $dir="right" aria-label="Вправо" />
              </HScroll>
            </TreeBox>
            <Preview />
            <TabRow><Tab>Построение</Tab></TabRow>
          </Panel>

          <Viewport><Machine /></Viewport>
        </Body>

        <PropertyBar>
          <PropertyGrip />
          <PropertyFields>
            <PropertyLine />
            <PropertyTabs />
          </PropertyFields>
        </PropertyBar>
        <DockRow>
          <DockTab><Icon name="lib" size={14} />Менеджер библиотек</DockTab>
        </DockRow>
        <StatusBar>Щелкните левой кнопкой мыши на объекте для его выделения (вместе с Ctrl - добавить к выделенным)</StatusBar>

        <Taskbar>
          <StartButton aria-label="Пуск"><WindowsLogo /></StartButton>
          <TaskList>
            {APPS.map((a) => (
              <TaskButton key={a.n} $state={a.s} aria-label={a.n}><Svg $s={15} viewBox="0 0 16 16" aria-hidden="true">{a.g}</Svg></TaskButton>
            ))}
            <TaskButton $state="front" aria-label="КОМПАС"><KompasLogo size={14} /></TaskButton>
          </TaskList>
          <Tray>
            <Language>RU</Language>
            <TrayButton aria-label="Скрытые значки"><Icon name="up" /></TrayButton>
            <TrayButton aria-label="Центр поддержки"><Icon name="flag" size={13} /></TrayButton>
            <TrayButton aria-label="Сеть"><Icon name="net" size={13} /></TrayButton>
            <TrayButton aria-label="Громкость"><Icon name="sound" size={13} /></TrayButton>
          </Tray>
          <Clock>12:38</Clock>
          <ShowDesktop aria-label="Показать рабочий стол" />
        </Taskbar>
      </Window>
    </>
  );
}
